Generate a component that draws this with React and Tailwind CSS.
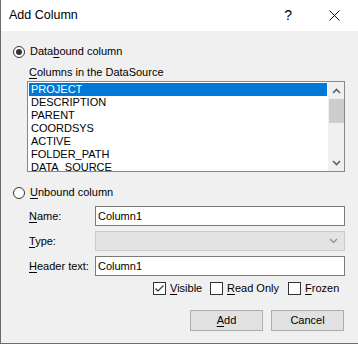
import React from "react";

const font = { fontFamily: '"Liberation Sans", Arial, sans-serif' };

const U = ({ children }) => <span className="underline underline-offset-2">{children}</span>;

const Radio = ({ checked, children }) => (
  <div className="flex items-center h-[15px] pl-[12px]">
    <span className="w-[12px] h-[12px] rounded-full border border-[#333] bg-white flex items-center justify-center">
      {checked && <span className="w-[6px] h-[6px] rounded-full bg-[#333]" />}
    </span>
    <span className="ml-[5px] text-[11px] leading-[13px] text-black">{children}</span>
  </div>
);

const Check = ({ checked, className, children }) => (
  <div className={`flex items-center ${className}`}>
    <span className="w-[13px] h-[13px] border border-[#333] bg-white flex items-center justify-center shrink-0">
      {checked && (
        <svg width="11" height="11" viewBox="0 0 11 11">
          <path d="M1.5 5.5 L4 8 L9.5 2.5" stroke="#333" strokeWidth="1.2" fill="none" />
        </svg>
      )}
    </span>
    <span className="ml-[4px] text-[11px] leading-[13px] whitespace-nowrap">{children}</span>
  </div>
);

const Chevron = ({ up }) => (
  <svg width="9" height="6" viewBox="0 0 9 6">
    <path d={up ? "M1 5 L4.5 1.5 L8 5" : "M1 1 L4.5 4.5 L8 1"} stroke="#606060" strokeWidth="1.6" fill="none" />
  </svg>
);

const items = ["PROJECT", "DESCRIPTION", "PARENT", "COORDSYS", "ACTIVE", "FOLDER_PATH", "DATA_SOURCE"];

export default function App() {
  return (
    <div className="w-[358px] h-[345px] bg-white" style={font}>
      <div className="w-[358px] h-[344px] border-l border-b border-[#6b6b6b] flex flex-col">
        {/* title bar */}
        <div className="h-[31px] bg-white flex items-center shrink-0">
          <span className="ml-[8px] text-[12.5px] text-black">Add Column</span>
          <span className="ml-auto text-[14px] text-black mr-[37px]">?</span>
          <svg className="mr-[18px]" width="11" height="11" viewBox="0 0 11 11">
            <path d="M0.5 0.5 L10.5 10.5 M10.5 0.5 L0.5 10.5" stroke="#111" strokeWidth="1" />
          </svg>
        </div>

        {/* body */}
        <div className="flex-1 bg-[#f0f0f0] flex flex-col text-black">
          <div className="mt-[13px]">
            <Radio checked>
              Data<U>b</U>ound column
            </Radio>
          </div>
          <div className="mt-[6px] h-[14px] pl-[28px] text-[11px] leading-[14px]">
            <U>C</U>olumns in the DataSource
          </div>

          {/* list box */}
          <div className="mt-[2px] ml-[26px] w-[318px] h-[91px] border border-[#828790] bg-white flex">
            <div className="flex-1 pt-[1px] pl-[1px] pr-[1px] overflow-hidden">
              {items.map((it, i) => (
                <div
                  key={it}
                  className={`h-[13px] leading-[13px] text-[11px] pl-[2px] ${
                    i === 0 ? "bg-[#0078d7] text-white" : "text-black"
                  }`}
                >
                  {it}
                </div>
              ))}
            </div>
            <div className="w-[16px] bg-[#f0f0f0] flex flex-col items-center">
              <div className="h-[17px] flex items-center justify-center">
                <Chevron up />
              </div>
              <div className="w-[15px] h-[24px] bg-[#cdcdcd]" />
              <div className="flex-1" />
              <div className="h-[17px] flex items-center justify-center">
                <Chevron />
              </div>
            </div>
          </div>

          <div className="mt-[13px]">
            <Radio>
              <U>U</U>nbound column
            </Radio>
          </div>

          {/* fields */}
          <div className="mt-[6px] flex items-center h-[20px]">
            <span className="w-[94px] pl-[28px] text-[11px] shrink-0">
              <U>N</U>ame:
            </span>
            <div className="w-[250px] h-[20px] border border-[#7a7a7a] bg-white text-[11px] leading-[18px] pl-[2px]">
              Column1
            </div>
          </div>
          <div className="mt-[5px] flex items-center h-[20px]">
            <span className="w-[94px] pl-[28px] text-[11px] shrink-0">
              <U>T</U>ype:
            </span>
            <div className="w-[250px] h-[20px] border border-[#cccccc] bg-[#e3e3e3] flex items-center justify-end pr-[6px]">
              <svg width="9" height="6" viewBox="0 0 9 6">
                <path d="M1 1 L4.5 4.5 L8 1" stroke="#8a8a8a" strokeWidth="1.2" fill="none" />
              </svg>
            </div>
          </div>
          <div className="mt-[5px] flex items-center h-[20px]">
            <span className="w-[94px] pl-[28px] text-[11px] shrink-0 whitespace-nowrap">
              <U>H</U>eader text:
            </span>
            <div className="w-[250px] h-[20px] border border-[#7a7a7a] bg-white text-[11px] leading-[18px] pl-[2px]">
              Column1
            </div>
          </div>

          {/* checkboxes */}
          <div className="mt-[6px] flex items-center pl-[152px]">
            <Check checked className="w-[57px]">
              <U>V</U>isible
            </Check>
            <Check className="w-[78px]">
              <U>R</U>ead Only
            </Check>
            <Check>
              <U>F</U>rozen
            </Check>
          </div>

          {/* buttons */}
          <div className="mt-[15px] flex gap-[8px] pl-[189px]">
            <button className="w-[73px] h-[21px] bg-[#e1e1e1] border border-[#adadad] text-[11px] text-black">
              <U>A</U>dd
            </button>
            <button className="w-[73px] h-[21px] bg-[#e1e1e1] border border-[#adadad] text-[11px] text-black">
              Cancel
            </button>
          </div>
        </div>
      </div>
    </div>
  );
}
